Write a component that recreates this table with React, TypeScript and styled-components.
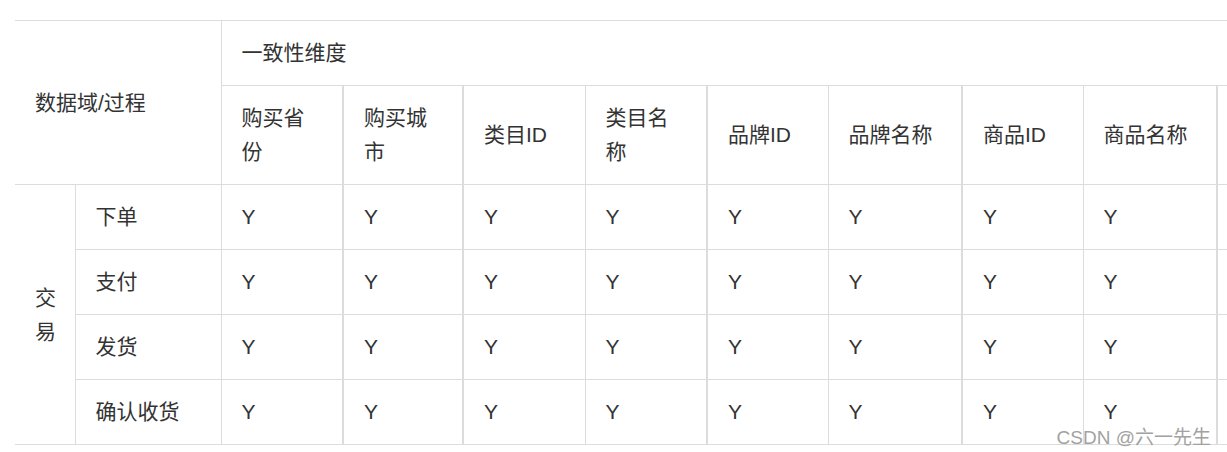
import React from 'react'
import styled, { createGlobalStyle } from 'styled-components'

//-----------------------------------------------------------------------------
// Data
//-----------------------------------------------------------------------------
const dimensions = [
  '购买省份',
  '购买城市',
  '类目ID',
  '类目名称',
  '品牌ID',
  '品牌名称',
  '商品ID',
  '商品名称'
]

// columns whose left rule renders 2px wide in the reference
const thickColumns = [1, 2, 4, 6]

const dimensionWidths = [122, 120, 122, 122, 121, 134, 121, 134]

// the table runs on past the right edge of the window
const overflowWidth = 150

const processes = ['下单', '支付', '发货', '确认收货']

const tableWidth =
  60 + 146 + dimensionWidths.reduce((sum, width) => sum + width, 0) + overflowWidth

//-----------------------------------------------------------------------------
// Component
//-----------------------------------------------------------------------------
const App = () => {
  return (
    <Page>
      <GlobalStyle />
      <Table style={{ width: tableWidth }}>
        <colgroup>
          <col style={{ width: 60 }} />
          <col style={{ width: 146 }} />
          {dimensionWidths.map((width, index) => (
            <col key={index} style={{ width }} />
          ))}
          <col style={{ width: overflowWidth }} />
        </colgroup>
        <thead>
          <tr>
            <Cell as="th" rowSpan={2} colSpan={2} $noLeft>
              数据域/过程
            </Cell>
            <Cell as="th" colSpan={dimensions.length + 1}>
              一致性维度
            </Cell>
          </tr>
          <tr>
            {dimensions.map((name, index) => (
              <Cell as="th" key={name} $thick={thickColumns.includes(index)}>
                {name}
              </Cell>
            ))}
            <Cell as="th" $thick />
          </tr>
        </thead>
        <tbody>
          {processes.map((process, rowIndex) => (
            <tr key={process}>
              {rowIndex === 0 && (
                <Cell rowSpan={processes.length} $noLeft>
                  交易
                </Cell>
              )}
              <Cell>{process}</Cell>
              {dimensions.map((name, index) => (
                <Cell key={name} $thick={thickColumns.includes(index)}>
                  Y
                </Cell>
              ))}
              <Cell $thick />
            </tr>
          ))}
        </tbody>
      </Table>
      <Watermark>CSDN @六一先生</Watermark>
    </Page>
  )
}

//-----------------------------------------------------------------------------
// Styled Components
//-----------------------------------------------------------------------------
const GlobalStyle = createGlobalStyle`
  html, body {
    margin: 0;
    background: #fff;
    overflow: hidden;
  }
`

const Page = styled.div`
  position: relative;
  width: 1227px;
  height: 452px;
  overflow: hidden;
  padding: 20px 0 0 15px;
  box-sizing: border-box;
  font-family: "Liberation Sans", "Noto Sans CJK SC", sans-serif;
  color: #333;
`

const Table = styled.table`
  border-collapse: collapse;
  table-layout: fixed;
  font-size: 21px;
  line-height: 34px;
  border-top: 1px solid #dcdcdc;
  border-bottom: 1px solid #dcdcdc;
`

const Cell = styled.td<{ $thick?: boolean; $noLeft?: boolean }>`
  padding: 15px 20px;
  text-align: left;
  font-weight: normal;
  vertical-align: middle;
  border-top: 1px solid #dcdcdc;
  border-left: ${p => (p.$noLeft ? 'none' : `${p.$thick ? 2 : 1}px solid #dcdcdc`)};
`

const Watermark = styled.div`
  position: absolute;
  right: 16px;
  bottom: 2px;
  font-size: 19px;
  line-height: 24px;
  color: #a2a2a2;
  white-space: nowrap;
`

export default App
